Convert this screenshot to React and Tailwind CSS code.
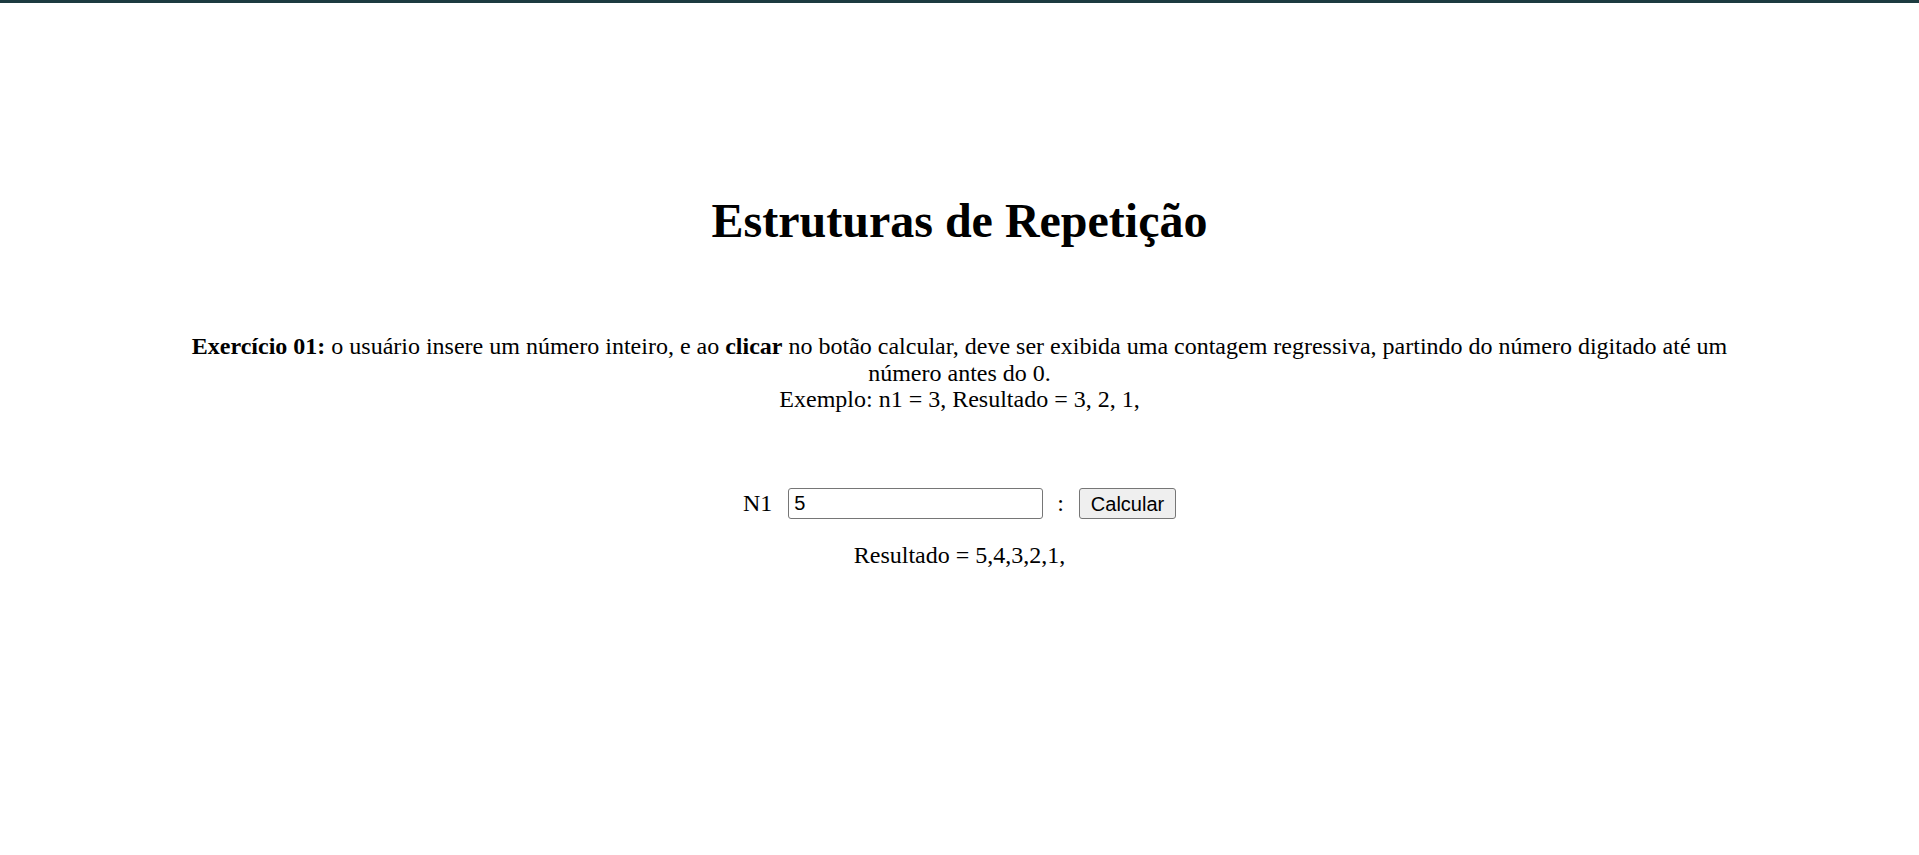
export default function App() {
  return (
    <div className="min-h-[855px] bg-white text-black" style={{ fontFamily: '"Liberation Serif", "Times New Roman", serif' }}>
      <div className="h-[3px] bg-[#1d3b40]"></div>
      <div className="pt-[194px]">
        <h1 className="text-center text-[48px] leading-[48px] font-bold">Estruturas de Repetição</h1>
        <p className="mt-[88px] text-center text-[24px] leading-[26.67px]">
          <b>Exercício 01:</b> o usuário insere um número inteiro, e ao <b>clicar</b> no botão calcular, deve ser exibida uma contagem regressiva, partindo do número digitado até um
          <br />
          número antes do 0.
          <br />
          Exemplo: n1 = 3, Resultado = 3, 2, 1,
        </p>
        <div className="mt-[72px] flex items-center justify-center text-[24px]">
          <span>N1</span>
          <input
            type="text"
            defaultValue="5"
            className="ml-[16px] w-[255px] h-[31px] border border-[#767676] rounded-[3px] pl-[5px] text-[20px] text-black outline-none"
            style={{ fontFamily: '"Liberation Sans", Arial, sans-serif' }}
          />
          <span className="ml-[14px]">:</span>
          <button
            className="ml-[15px] w-[97px] h-[31px] border border-[#767676] rounded-[3px] bg-[#efefef] text-[20px] text-black"
            style={{ fontFamily: '"Liberation Sans", Arial, sans-serif' }}
          >
            Calcular
          </button>
        </div>
        <p className="mt-[21px] text-center text-[24px] leading-[27px]">Resultado = 5,4,3,2,1,</p>
      </div>
    </div>
  );
}
